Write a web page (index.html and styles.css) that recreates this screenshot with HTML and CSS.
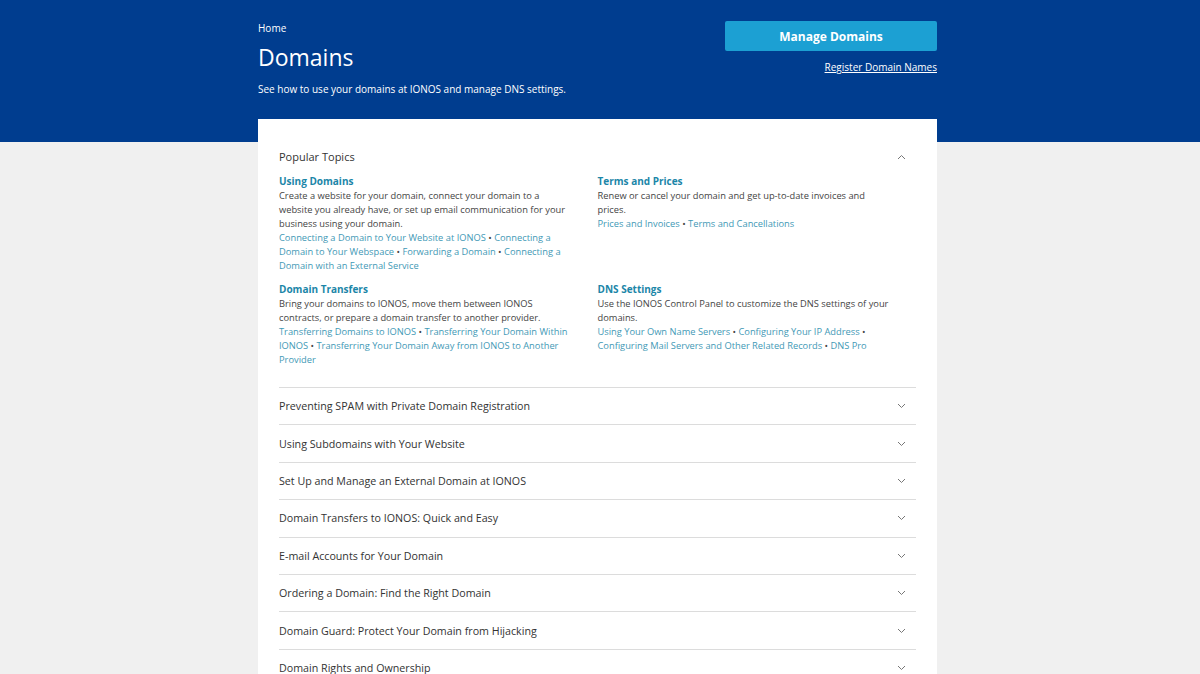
FILE: index.html
```html
<!DOCTYPE html>
<html lang="en">
<head>
<meta charset="utf-8">
<title>Domains</title>
<link rel="stylesheet" href="styles.css">
</head>
<body>
<header class="hero">
  <div class="wrap hero-inner">
    <div class="hero-text">
      <a class="crumb" href="#">Home</a>
      <h1 class="title">Domains</h1>
      <p class="lead">See how to use your domains at IONOS and manage DNS settings.</p>
    </div>
    <div class="hero-actions">
      <a class="btn" href="#">Manage Domains</a>
      <a class="reg" href="#">Register Domain Names</a>
    </div>
  </div>
</header>
<main class="wrap card">
  <section class="popular">
    <div class="acc-head">
      <span>Popular Topics</span>
      <svg class="chev" width="9" height="6" viewBox="0 0 9 6"><path d="M1 5 L4.5 1.5 L8 5" fill="none" stroke="#777" stroke-width="1"/></svg>
    </div>
    <div class="topics">
      <div class="topic">
        <a class="t-head" href="#">Using Domains</a>
        <p>Create a website for your domain, connect your domain to a website you already have, or set up email communication for your business using your domain.</p>
        <p class="links"><a href="#">Connecting a Domain to Your Website at IONOS</a> • <a href="#">Connecting a Domain to Your Webspace</a> • <a href="#">Forwarding a Domain</a> • <a href="#">Connecting a Domain with an External Service</a></p>
      </div>
      <div class="topic">
        <a class="t-head" href="#">Terms and Prices</a>
        <p>Renew or cancel your domain and get up-to-date invoices and prices.</p>
        <p class="links"><a href="#">Prices and Invoices</a> • <a href="#">Terms and Cancellations</a></p>
      </div>
      <div class="topic">
        <a class="t-head" href="#">Domain Transfers</a>
        <p>Bring your domains to IONOS, move them between IONOS contracts, or prepare a domain transfer to another provider.</p>
        <p class="links"><a href="#">Transferring Domains to IONOS</a> • <a href="#">Transferring Your Domain Within IONOS</a> • <a href="#">Transferring Your Domain Away from IONOS to Another Provider</a></p>
      </div>
      <div class="topic">
        <a class="t-head" href="#">DNS Settings</a>
        <p>Use the IONOS Control Panel to customize the DNS settings of your domains.</p>
        <p class="links"><a href="#">Using Your Own Name Servers</a> • <a href="#">Configuring Your IP Address</a> • <a href="#">Configuring Mail Servers and Other Related Records</a> • <a href="#">DNS Pro</a></p>
      </div>
    </div>
  </section>
  <ul class="acc">
    <li class="acc-row"><span>Preventing SPAM with Private Domain Registration</span><svg class="chev" width="9" height="6" viewBox="0 0 9 6"><path d="M1 1 L4.5 4.5 L8 1" fill="none" stroke="#777" stroke-width="1"/></svg></li>
    <li class="acc-row"><span>Using Subdomains with Your Website</span><svg class="chev" width="9" height="6" viewBox="0 0 9 6"><path d="M1 1 L4.5 4.5 L8 1" fill="none" stroke="#777" stroke-width="1"/></svg></li>
    <li class="acc-row"><span>Set Up and Manage an External Domain at IONOS</span><svg class="chev" width="9" height="6" viewBox="0 0 9 6"><path d="M1 1 L4.5 4.5 L8 1" fill="none" stroke="#777" stroke-width="1"/></svg></li>
    <li class="acc-row"><span>Domain Transfers to IONOS: Quick and Easy</span><svg class="chev" width="9" height="6" viewBox="0 0 9 6"><path d="M1 1 L4.5 4.5 L8 1" fill="none" stroke="#777" stroke-width="1"/></svg></li>
    <li class="acc-row"><span>E-mail Accounts for Your Domain</span><svg class="chev" width="9" height="6" viewBox="0 0 9 6"><path d="M1 1 L4.5 4.5 L8 1" fill="none" stroke="#777" stroke-width="1"/></svg></li>
    <li class="acc-row"><span>Ordering a Domain: Find the Right Domain</span><svg class="chev" width="9" height="6" viewBox="0 0 9 6"><path d="M1 1 L4.5 4.5 L8 1" fill="none" stroke="#777" stroke-width="1"/></svg></li>
    <li class="acc-row"><span>Domain Guard: Protect Your Domain from Hijacking</span><svg class="chev" width="9" height="6" viewBox="0 0 9 6"><path d="M1 1 L4.5 4.5 L8 1" fill="none" stroke="#777" stroke-width="1"/></svg></li>
    <li class="acc-row"><span>Domain Rights and Ownership</span><svg class="chev" width="9" height="6" viewBox="0 0 9 6"><path d="M1 1 L4.5 4.5 L8 1" fill="none" stroke="#777" stroke-width="1"/></svg></li>
  </ul>
</main>
</body>
</html>
```
FILE: styles.css
```css
* { box-sizing: border-box; }
html, body { margin: 0; padding: 0; }
body {
  background: #f0f0f0;
  font-family: "Open Sans", "Liberation Sans", sans-serif;
  color: #333;
  overflow: hidden;
  height: 674px;
}
a { text-decoration: none; color: inherit; }
.wrap {
  width: 679px;
  margin-left: calc(50% - 342px);
}
.hero {
  background: #003d8f;
  height: 142px;
  color: #fff;
}
.hero-inner {
  display: flex;
  justify-content: space-between;
  padding-top: 21px;
}
.hero-text { display: flex; flex-direction: column; }
.crumb { font-size: 10px; line-height: 14px; }
.title {
  margin: 7px 0 0;
  font-size: 23px;
  font-weight: 400;
  line-height: 30px;
}
.lead { margin: 10px 0 0; font-size: 10px; line-height: 14px; }
.hero-actions {
  display: flex;
  flex-direction: column;
  align-items: flex-end;
}
.btn {
  width: 212px;
  height: 30px;
  background: #1ca0d3;
  border-radius: 2px;
  color: #fff;
  font-weight: 700;
  font-size: 12px;
  display: flex;
  align-items: center;
  justify-content: center;
}
.reg {
  margin-top: 9px;
  font-size: 10px;
  line-height: 14px;
  text-decoration: underline;
}
.card {
  background: #fff;
  margin-top: -23px;
  padding: 31px 21px 0;
  height: 555px;
  overflow: hidden;
}
.acc-head {
  display: flex;
  justify-content: space-between;
  align-items: center;
  font-size: 11px;
  line-height: 14px;
  padding-right: 10px;
}
.topics {
  display: grid;
  grid-template-columns: 1fr 1fr;
  row-gap: 9px;
  margin-top: 10px;
  padding-bottom: 20px;
}
.topic { padding-right: 26px; font-size: 9.3px; line-height: 14px; }
.topic p { margin: 0; color: #444; }
.t-head { display: block; color: #1b86a8; font-weight: 700; font-size: 10px; line-height: 15px; }
.links a, .links { color: #3f99b6; }
.acc { list-style: none; margin: 0; padding: 0; }
.acc-row {
  border-top: 1px solid #dcdcdc;
  height: 37.4px;
  display: flex;
  justify-content: space-between;
  align-items: center;
  font-size: 10.7px;
  padding-right: 10px;
}
.chev { display: block; }
```
